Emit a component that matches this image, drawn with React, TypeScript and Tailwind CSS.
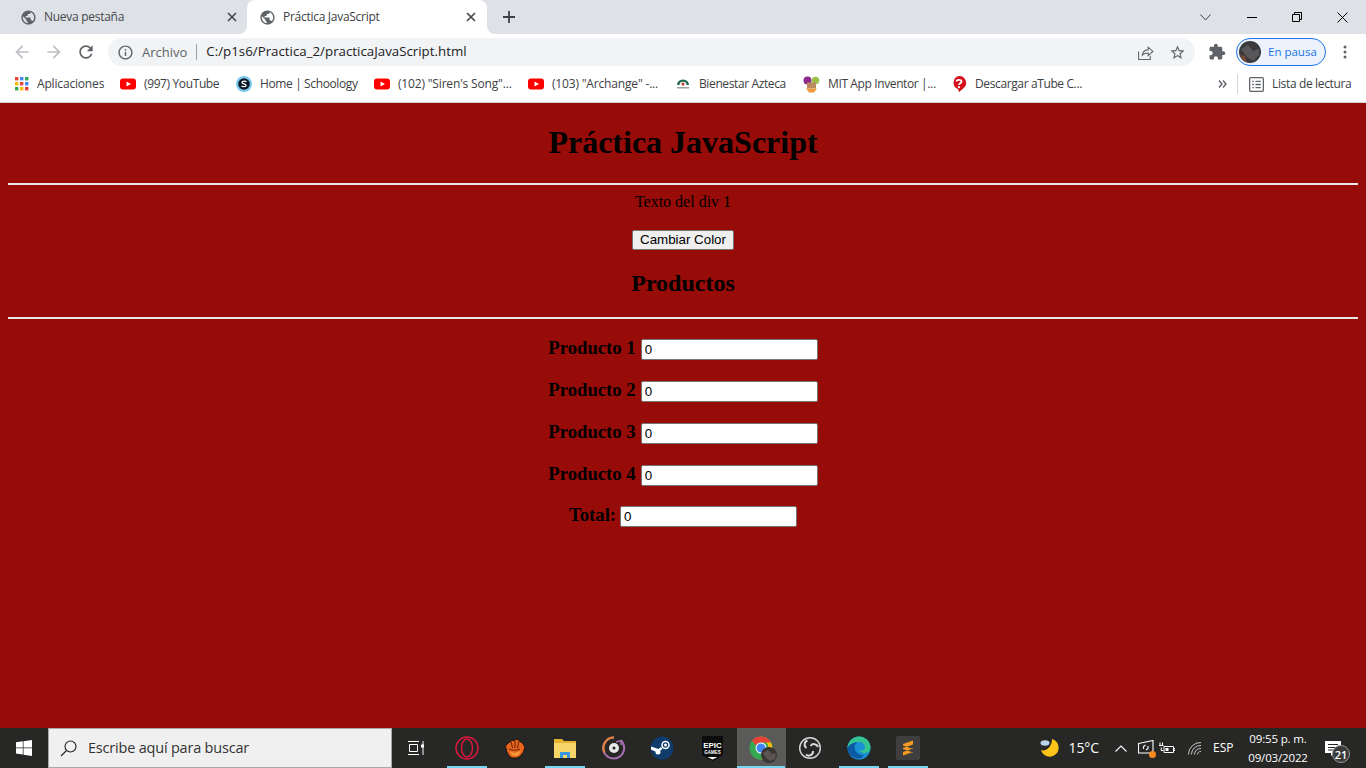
import React from 'react'

const GLOBE = 'M12 2C6.48 2 2 6.48 2 12s4.48 10 10 10 10-4.48 10-10S17.52 2 12 2zm-1 17.93c-3.95-.49-7-3.85-7-7.93 0-.62.08-1.21.21-1.79L9 15v1c0 1.1.9 2 2 2v1.93zm6.9-2.54c-.26-.81-1-1.39-1.9-1.39h-1v-3c0-.55-.45-1-1-1H8v-2h2c.55 0 1-.45 1-1V7h2c1.1 0 2-.9 2-2v-.41c2.93 1.19 5 4.06 5 7.41 0 2.08-.8 3.97-2.1 5.39z'

function Icon({ d, size = 16, color = '#5f6368' }: { d: string; size?: number; color?: string }) {
    return (
        <svg width={size} height={size} viewBox="0 0 24 24" fill={color} className="shrink-0">
            <path d={d} />
        </svg>
    )
}

function CloseX({ color = '#45494d' }: { color?: string }) {
    return (
        <svg width="10" height="10" viewBox="0 0 10 10" stroke={color} strokeWidth="1.7" className="shrink-0">
            <path d="M1 1l8 8M9 1l-8 8" />
        </svg>
    )
}

function Tab({ title, active }: { title: string; active?: boolean }) {
    return (
        <div className={active ? 'relative flex h-[34px] w-[240px] items-center rounded-t-lg bg-white pl-[12px] pr-[11px] text-[#3c4043]' : 'relative flex h-[34px] w-[239px] items-center pl-[12px] pr-[10px] text-[#45494d]'}>
            <Icon d={GLOBE} size={17} />
            <span className="ml-[7px] flex-1 text-[12px] leading-none tracking-[-0.28px]">{title}</span>
            <CloseX />
            {active && (
                <>
                    <span className="absolute bottom-0 left-[-8px] h-2 w-2 bg-white">
                        <span className="block h-2 w-2 rounded-br-lg bg-[#dee1e6]" />
                    </span>
                    <span className="absolute bottom-0 right-[-8px] h-2 w-2 bg-white">
                        <span className="block h-2 w-2 rounded-bl-lg bg-[#dee1e6]" />
                    </span>
                </>
            )}
        </div>
    )
}

function YouTubeIcon() {
    return (
        <svg width="16" height="16" viewBox="0 0 16 16" className="shrink-0">
            <rect y="2.5" width="16" height="11" rx="3" fill="#f00" />
            <path d="M6.5 5.5v5L11 8z" fill="#fff" />
        </svg>
    )
}

function AppsIcon() {
    const colors = ['#ea4335', '#4285f4', '#34a853', '#fbbc04', '#ea4335', '#4285f4', '#34a853', '#fbbc04', '#ea4335']
    return (
        <svg width="14" height="14" viewBox="0 0 14 14" className="shrink-0">
            {colors.map((c, i) => (
                <rect key={i} x={(i % 3) * 5} y={Math.floor(i / 3) * 5} width="3.4" height="3.4" fill={c} />
            ))}
        </svg>
    )
}

function SchoologyIcon() {
    return (
        <svg width="16" height="16" viewBox="0 0 16 16" className="shrink-0">
            <circle cx="8" cy="8" r="8" fill="#7cc8ea" />
            <circle cx="8" cy="8" r="5.8" fill="#0d1a24" />
            <path d="M10.4 5.9C9.8 5 6.1 4.8 6 6.5c-.1 1.7 4.2 1.2 4.1 3-.1 1.6-3.8 1.4-4.6.4" fill="none" stroke="#fff" strokeWidth="1.3" />
        </svg>
    )
}

function BienestarIcon() {
    return (
        <svg width="16" height="16" viewBox="0 0 16 16" className="shrink-0">
            <path d="M2 9a6 5.5 0 0 1 12 0h-2.500a3.500 3.200 0 0 0-7 0z" fill="#1d6b4c" />
            <circle cx="8" cy="8" r="1.600" fill="#c0392b" />
            <rect x="2" y="11" width="12" height="1.500" fill="#9aa5a0" />
        </svg>
    )
}

function MitIcon() {
    return (
        <svg width="17" height="17" viewBox="0 0 17 17" className="shrink-0">
            <circle cx="4.500" cy="4.500" r="4" fill="#8c2a8c" />
            <circle cx="12.500" cy="4.500" r="3.800" fill="#9cc04a" />
            <rect x="4" y="6.500" width="9" height="6" fill="#b98a5e" />
            <path d="M3 12.500h11l-3 4H6z" fill="#ef9a3c" />
        </svg>
    )
}

function HelpIcon() {
    return (
        <svg width="16" height="16" viewBox="0 0 16 16" className="shrink-0">
            <path d="M8 0a7 7 0 0 1 4 12.800L8 16l-1-3A6.800 6.800 0 0 1 8 0z" fill="#d3101c" />
            <path d="M5.500 5.500C5.800 3.300 10.500 3.300 10.500 5.800c0 1.600-2.500 1.500-2.500 3.200" fill="none" stroke="#fff" strokeWidth="1.800" />
            <circle cx="8" cy="11.200" r="1.100" fill="#fff" />
        </svg>
    )
}

function Bookmark({ icon, label, width, loose }: { icon: React.ReactNode; label: string; width: string; loose?: boolean }) {
    return (
        <div className={`flex shrink-0 items-center gap-[8px] ${width}`}>
            {icon}
            <span className={loose ? 'whitespace-nowrap text-[12px] leading-none tracking-[-0.17px] text-[#3c4043]' : 'whitespace-nowrap text-[12px] leading-none tracking-[-0.38px] text-[#3c4043]'}>{label}</span>
        </div>
    )
}

function BrowserChrome() {
    return (
        <header className="shrink-0 font-['Open_Sans',sans-serif]">
            <div className="flex h-[34px] items-end bg-[#dee1e6] pl-[8px]">
                <Tab title="Nueva pestaña" />
                <Tab title="Práctica JavaScript" active />
                <div className="ml-[14px] flex h-[34px] w-[16px] items-center justify-center">
                    <svg width="12" height="12" viewBox="0 0 12 12" stroke="#3c4043" strokeWidth="1.8"><path d="M6 0v12M0 6h12" /></svg>
                </div>
                <div className="ml-auto flex h-[34px] items-center">
                    <svg width="11" height="7" viewBox="0 0 11 7" fill="none" stroke="#3c4043" strokeWidth="1"><path d="M.5.5l5 5.500 5-5.500" /></svg>
                    <div className="ml-[36px] h-px w-[10px] bg-black" />
                    <svg width="10" height="10" viewBox="0 0 10 10" fill="none" stroke="#000" strokeWidth="1" className="ml-[35px]"><path d="M.5 2.500h7v7h-7zM2.500 2.500v-2h7v7h-2" /></svg>
                    <svg width="11" height="11" viewBox="0 0 11 11" stroke="#000" strokeWidth="1" className="ml-[35px] mr-[18px]"><path d="M.5.500l10 10M10.500.500l-10 10" /></svg>
                </div>
            </div>

            <div className="flex h-[34px] items-center bg-white pl-[12px] pt-[2px]">
                <Icon d="M20 11H7.830l5.590-5.590L12 4l-8 8 8 8 1.410-1.410L7.830 13H20v-2z" color="#bcbfc3" size={20} />
                <div className="ml-[12px]"><Icon d="M12 4l-1.410 1.410L16.170 11H4v2h12.170l-5.580 5.590L12 20l8-8z" color="#bcbfc3" size={20} /></div>
                <div className="ml-[12px]"><Icon d="M17.650 6.350C16.200 4.900 14.210 4 12 4c-4.420 0-7.990 3.580-7.990 8s3.570 8 7.990 8c3.730 0 6.840-2.550 7.730-6h-2.080c-.82 2.330-3.040 4-5.650 4-3.310 0-6-2.690-6-6s2.690-6 6-6c1.660 0 3.140.69 4.220 1.780L13 11h7V4l-2.350 2.350z" size={20} /></div>
                <div className="ml-[12px] flex h-[28px] w-[1087px] items-center rounded-full bg-[#f1f3f4] pl-[9px] pr-[9px]">
                    <Icon d="M11 7h2v2h-2zm0 4h2v6h-2zm1-9C6.480 2 2 6.480 2 12s4.480 10 10 10 10-4.480 10-10S17.520 2 12 2zm0 18c-4.410 0-8-3.590-8-8s3.590-8 8-8 8 3.590 8 8-3.590 8-8 8z" size={17} />
                    <span className="ml-[8px] text-[13px] leading-none text-[#5f6368]">Archivo</span>
                    <span className="ml-[9px] h-[16px] w-px bg-[#9aa0a6]" />
                    <span className="ml-[9px] text-[13.3px] leading-none text-[#202124]">C:/p1s6/Practica_2/practicaJavaScript.html</span>
                    <div className="ml-auto flex items-center gap-[15px]">
                        <svg width="17" height="17" viewBox="0 0 16 16" fill="none" stroke="#5f6368" strokeWidth="1"><path d="M1.500 7v7.500h11V11M5 10.500C5.500 7 8 5.500 10.500 5.500V3l4.500 4-4.500 4V8.500C8.500 8.500 6.500 9 5 10.500z" /></svg>
                        <Icon d="M22 9.240l-7.190-.62L12 2 9.190 8.630 2 9.240l5.460 4.730L5.820 21 12 17.270 18.180 21l-1.630-7.030L22 9.240zM12 15.400l-3.760 2.270 1-4.280-3.320-2.880 4.380-.38L12 6.100l1.710 4.040 4.380.38-3.320 2.880 1 4.280L12 15.400z" size={17} />
                    </div>
                </div>
                <div className="ml-[13px]"><Icon d="M20.500 11H19V7c0-1.100-.9-2-2-2h-4V3.500C13 2.120 11.880 1 10.500 1S8 2.120 8 3.500V5H4c-1.100 0-1.990.9-1.990 2v3.800H3.500c1.490 0 2.700 1.210 2.700 2.700s-1.210 2.700-2.700 2.700H2V20c0 1.100.9 2 2 2h3.800v-1.500c0-1.490 1.210-2.700 2.700-2.700 1.490 0 2.700 1.210 2.700 2.700V22H17c1.100 0 2-.9 2-2v-4h1.500c1.380 0 2.500-1.120 2.500-2.500S21.880 11 20.500 11z" size={18} /></div>
                <div className="ml-[10px] flex h-[28px] w-[90px] items-center rounded-full border border-[#1a73e8] bg-[#edf3fd] pl-[2px]">
                    <svg width="22" height="22" viewBox="0 0 22 22" className="shrink-0">
                        <circle cx="11" cy="11" r="11" fill="#3a3a3c" />
                        <path d="M2 8l7-4 5 6 6-2v6l-6 6-6-4z" fill="#59575a" />
                        <path d="M1 14l5 1 2 6-4-2z" fill="#7a4a34" />
                    </svg>
                    <span className="ml-[7px] whitespace-nowrap text-[11.500px] leading-none text-[#1a73e8]">En pausa</span>
                </div>
                <svg width="4" height="14" viewBox="0 0 4 14" fill="#5f6368" className="ml-[17px]"><circle cx="2" cy="2" r="1.500" /><circle cx="2" cy="7" r="1.500" /><circle cx="2" cy="12" r="1.500" /></svg>
            </div>

            <div className="flex h-[35px] items-center border-b border-[#d4d6da] bg-white pb-[2px] pl-[15px]">
                <Bookmark icon={<AppsIcon />} label="Aplicaciones" width="w-[105px]" loose />
                <Bookmark icon={<YouTubeIcon />} label="(997) YouTube" width="w-[116px]" />
                <Bookmark icon={<SchoologyIcon />} label="Home | Schoology" width="w-[138px]" />
                <Bookmark icon={<YouTubeIcon />} label={'(102) "Siren\'s Song"...'} width="w-[154px]" loose />
                <Bookmark icon={<YouTubeIcon />} label={'(103) "Archange" -...'} width="w-[147px]" loose />
                <Bookmark icon={<BienestarIcon />} label="Bienestar Azteca" width="w-[128px]" />
                <Bookmark icon={<MitIcon />} label="MIT App Inventor |..." width="w-[148px]" />
                <Bookmark icon={<HelpIcon />} label="Descargar aTube C..." width="w-[266px]" />
                <svg width="9" height="8" viewBox="0 0 9 8" fill="none" stroke="#5f6368" strokeWidth="1.4" className="ml-[1px]"><path d="M1 .5L4 4 1 7.500M5 .5L8 4 5 7.500" /></svg>
                <span className="ml-[10px] h-[20px] w-px bg-[#d4d6da]" />
                <svg width="15" height="15" viewBox="0 0 14 14" fill="none" stroke="#5f6368" strokeWidth="1.200" className="ml-[11px]"><rect x=".6" y=".6" width="12.800" height="12.800" rx="1" /><path d="M3 4h1.500M6 4h5M3 7h1.500M6 7h5M3 10h1.500M6 10h5" /></svg>
                <span className="ml-[8px] whitespace-nowrap text-[12px] leading-none tracking-[-0.35px] text-[#3c4043]">Lista de lectura</span>
            </div>
        </header>
    )
}

function ProductRow({ label, last }: { label: string; last?: boolean }) {
    return (
        <div className={last ? 'flex h-[21px] items-center justify-center gap-[4px]' : 'mb-[21px] flex h-[21px] items-center justify-center gap-[5px]'}>
            <label className="pb-[2px] text-[18.720px] font-bold leading-none">{label}</label>
            <input
                readOnly
                value="0"
                className="h-[21px] w-[177px] rounded-[2px] border border-[#767676] bg-white px-[3px] font-['Liberation_Sans',sans-serif] text-[13.333px] text-black outline-none"
            />
        </div>
    )
}

function PracticePage() {
    return (
        <main className="flex-1 bg-[#970b08] px-[8px] pt-[21px] font-['Liberation_Serif',serif] text-black">
            <h1 className="h-[37px] text-center text-[32px] font-bold leading-[37px]">Práctica JavaScript</h1>
            <hr className="mt-[22px] border-t-2 border-[#e8e8e8]" />
            <p className="mt-[8px] h-[18px] text-center text-[16px] leading-[18px]">Texto del div 1</p>
            <div className="mt-[19px] flex justify-center">
                <button className="h-[20px] w-[102px] rounded-[2px] border border-[#767676] bg-[#efefef] font-['Liberation_Sans',sans-serif] text-[13.333px] leading-none text-black">
                    Cambiar Color
                </button>
            </div>
            <h2 className="mt-[19px] h-[28px] text-center text-[24px] font-bold leading-[28px]">Productos</h2>
            <hr className="mt-[20px] border-t-2 border-[#e8e8e8]" />
            <div className="mt-[20px]">
                <ProductRow label="Producto 1" />
                <ProductRow label="Producto 2" />
                <ProductRow label="Producto 3" />
                <ProductRow label="Producto 4" />
                <div className="mt-[-1px]">
                    <ProductRow label="Total:" last />
                </div>
            </div>
        </main>
    )
}

function TaskButton({ children, state }: { children: React.ReactNode; state?: 'open' | 'active' }) {
    return (
        <div className={state === 'active' ? 'relative flex h-[40px] w-[49px] shrink-0 items-center justify-center bg-[#5a5a58] pr-[1px]' : 'relative flex h-[40px] w-[49px] shrink-0 items-center justify-center pr-[1px]'}>
            {children}
            {state === 'open' && <span className="absolute bottom-0 left-[4px] h-[2px] w-[40px] bg-[#76d7f2]" />}
            {state === 'active' && <span className="absolute bottom-0 left-0 h-[2px] w-[48px] bg-[#76d7f2]" />}
        </div>
    )
}

function Taskbar() {
    return (
        <footer className="flex h-[40px] shrink-0 items-center bg-[#272726] font-['Open_Sans',sans-serif] text-white">
            <div className="flex h-[40px] w-[48px] shrink-0 items-center justify-center">
                <svg width="16" height="16" viewBox="0 0 16 16" fill="#fff"><path d="M0 2.300l6.800-1v6.200H0zM7.500 1.200L16 0v7.500H7.500zM0 8.300h6.800v6.300l-6.800-1zM7.500 8.300H16V16l-8.500-1.200z" /></svg>
            </div>
            <div className="flex h-[40px] w-[344px] shrink-0 items-center border border-[#a8a8a8] bg-[#f0f0f0] pl-[11px]">
                <svg width="17" height="17" viewBox="0 0 17 17" fill="none" stroke="#1f1f1f" strokeWidth="1.1"><circle cx="10.500" cy="6.500" r="5.500" /><path d="M6.500 10.500L1 16" /></svg>
                <span className="ml-[11px] whitespace-nowrap text-[14.500px] leading-none tracking-[-0.2px] text-[#333]">Escribe aquí para buscar</span>
            </div>
            <div className="flex h-[40px] w-[48px] shrink-0 items-center justify-center">
                <svg width="16" height="16" viewBox="0 0 16 16" fill="none" stroke="#fff" strokeWidth="1"><path d="M0 1.500h11M0 14.500h11M1.500 4.500h8v7h-8zM15 1v14" /><rect x="13" y="4.500" width="3" height="3" fill="#fff" stroke="none" /></svg>
            </div>
            <div className="ml-[3px] flex">
                <TaskButton state="open">
                    <svg width="24" height="24" viewBox="0 0 24 24" fill="none" stroke="#d9173f" strokeWidth="1.500"><circle cx="12" cy="12" r="11" /><ellipse cx="12" cy="12" rx="5.500" ry="9" /></svg>
                </TaskButton>
                <TaskButton>
                    <svg width="22" height="22" viewBox="0 0 22 22" className="mr-[2px]">
                        <path d="M1.500 9L4 6l1.500-.5L7 3l3 .5L12 2l3 1 1.500 2 2 1 2.500 4-1.500 5-3 4-3.500 2H8l-3-2-2.500-5z" fill="#e9641b" stroke="#171210" strokeWidth="1" />
                        <path d="M7 4l1.500 7M11 3.500V11M15 4l-1.500 7M5 12c3 1.500 8 1.500 11 0" fill="none" stroke="#5c2208" strokeWidth="1" />
                        <path d="M6 14c3 3 8 2 11-1-1 4-3 6-6 6s-4-2-5-5z" fill="#f89a3a" />
                    </svg>
                </TaskButton>
                <TaskButton state="open">
                    <svg width="22" height="20" viewBox="0 0 22 20"><path d="M0 1h8l2 2h12v3H0z" fill="#e6b32e" /><path d="M0 5h22v15H0z" fill="#f8d568" /><path d="M6 14h10v6h-3v-3H9v3H6z" fill="#3d97dc" /></svg>
                </TaskButton>
                <TaskButton>
                    <svg width="24" height="24" viewBox="0 0 24 24" fill="none">
                        <path d="M19 4.500A10.500 10.500 0 1 1 12 1.500" stroke="#a86fb0" strokeWidth="2" />
                        <path d="M12 1.500A10.500 10.500 0 0 0 2.500 16.500" stroke="#e8813a" strokeWidth="2" />
                        <path d="M14 6l5-1.500V9" stroke="#a86fb0" strokeWidth="1.500" />
                        <circle cx="12" cy="12" r="5" fill="#e8e8e8" />
                        <circle cx="12" cy="12" r="1.500" fill="#222" />
                    </svg>
                </TaskButton>
                <TaskButton>
                    <svg width="24" height="24" viewBox="0 0 24 24" className="mr-[3px]"><circle cx="12" cy="12" r="11.500" fill="#0f3c6b" /><circle cx="15.500" cy="9" r="3.500" fill="none" stroke="#fff" strokeWidth="1.500" /><circle cx="15.500" cy="9" r="1.500" fill="#fff" /><path d="M1 13.500l6.500 3 5-3.500-1.500-2-2.500 2L1 10.500z" fill="#fff" /><circle cx="8" cy="16" r="2.500" fill="#fff" /></svg>
                </TaskButton>
                <TaskButton>
                    <svg width="21" height="25" viewBox="0 0 21 25"><path d="M1 0h19a1 1 0 0 1 1 1v18l-10.500 6L0 19V1a1 1 0 0 1 1-1z" fill="#0c0c0c" /><path d="M10.500 23.500l-5-2.500h10z" fill="#fff" /><text x="10.500" y="11.500" textAnchor="middle" fontSize="8" fontWeight="700" fill="#fff" fontFamily="Liberation Sans">EPIC</text><text x="10.500" y="17.500" textAnchor="middle" fontSize="4.500" fontWeight="700" fill="#fff" fontFamily="Liberation Sans">GAMES</text></svg>
                </TaskButton>
                <TaskButton state="active">
                    <span className="relative block h-[24px] w-[24px]">
                        <svg width="24" height="24" viewBox="0 0 24 24">
                            <circle cx="12" cy="12" r="11.500" fill="#34a853" />
                            <path d="M12 .5A11.500 11.500 0 0 1 22 6.500H12a5.500 5.500 0 0 0-5 3L3 4.500A11.500 11.500 0 0 1 12 .5z" fill="#ea4335" />
                            <path d="M22 6.500A11.500 11.500 0 0 1 12 23.500l5-8a5.500 5.500 0 0 0 0-9z" fill="#fbbc04" />
                            <circle cx="12" cy="12" r="5.500" fill="#fff" />
                            <circle cx="12" cy="12" r="4.500" fill="#4285f4" />
                        </svg>
                        <svg width="16" height="16" viewBox="0 0 16 16" className="absolute bottom-[-3px] right-[-4px]">
                            <circle cx="8" cy="8" r="8" fill="#3a3634" />
                            <path d="M2 6l5-3 4 4 4-1-1 6-5 2-4-3z" fill="#5a5452" />
                        </svg>
                    </span>
                </TaskButton>
                <TaskButton>
                    <svg width="22" height="22" viewBox="0 0 22 22" fill="none" stroke="#d8d8d8">
                        <circle cx="11" cy="11" r="10.300" strokeWidth="1.400" />
                        <path d="M8.500 3.500a4.200 4.200 0 0 0-1 7.500M19 10a4.200 4.200 0 0 0-7.500-1M7 17.500a4.200 4.200 0 0 0 7-3.500" strokeWidth="2" />
                        <circle cx="11" cy="11" r="1.500" fill="#272726" stroke="none" />
                    </svg>
                </TaskButton>
                <TaskButton state="open">
                    <svg width="24" height="24" viewBox="0 0 24 24"><circle cx="12" cy="12" r="11.500" fill="#1b8fd6" /><path d="M12 .5a11.500 11.500 0 0 1 11.500 11.500c0 3-3 5-6.500 5-2.500 0-4-1-4.500-2.500 3.500.5 5.500-1 5.500-3C18 8 15 6 12 6 6 6 2 9 .5 12 .5 6 6 .5 12 .5z" fill="#35c48f" /><path d="M.5 12C2 9 6 6 11 6.500c-3 1-4 4-3 7 1 3.500 5 6 9 5.500-1.500 2.500-3 3.500-5 3.500C6 22.500.5 18 .5 12z" fill="#0c59a4" /></svg>
                </TaskButton>
                <TaskButton state="open">
                    <svg width="24" height="24" viewBox="0 0 24 24"><rect width="24" height="24" rx="2" fill="#3f3f3f" /><path d="M17 4.500L7 8v4l10-3.500zM7 9.500L17 13v3.500L7 13zM17 12.500L7 16v3.500L17 16z" fill="#f89b22" /></svg>
                </TaskButton>
            </div>

            <div className="ml-auto flex h-[40px] items-center">
                <svg width="20" height="20" viewBox="0 0 20 20"><path d="M12 1a9 9 0 1 1-11 11c5 2 11-3 11-11z" fill="#fcc419" /><ellipse cx="5" cy="5" rx="4.500" ry="2.800" fill="#b9d4ec" /></svg>
                <span className="ml-[9px] whitespace-nowrap text-[14px] leading-none tracking-[-0.1px]">15°C</span>
                <svg width="12" height="7" viewBox="0 0 12 7" fill="none" stroke="#fff" strokeWidth="1.1" className="ml-[16px]"><path d="M.5 6.500L6 1l5.500 5.500" /></svg>
                <span className="relative ml-[11px] block h-[16px] w-[16px]">
                    <svg width="16" height="16" viewBox="0 0 16 16" fill="none" stroke="#fff" strokeWidth="1.1"><path d="M.5 3.500L15 .5v12.500H.5z" /><path d="M5.500 9V6.500l2-1.500M10 6v2.500L8 10" /></svg>
                    <span className="absolute bottom-[-2px] right-[-2px] h-[7px] w-[7px] rounded-full bg-[#f58a1f]" />
                </span>
                <svg width="16" height="13" viewBox="0 0 16 13" fill="none" stroke="#fff" strokeWidth="1" className="ml-[5px]"><path d="M5 4.500h9.500v6H5z" /><path d="M15 6.500h1v2h-1" /><rect x="6.500" y="6" width="3" height="3" fill="#fff" stroke="none" /><path d="M1 .5v3M3.500.5v3M0 3.500h4.500M2.200 5.500v3h2" /></svg>
                <svg width="14" height="13" viewBox="0 0 14 13" fill="none" stroke="#c8c8c8" strokeWidth="1" className="ml-[13px]"><path d="M.5 12.500A12 12 0 0 1 13 .5M3.500 12.500A9 9 0 0 1 13 3.500M6.500 12.500A6 6 0 0 1 13 6.500M9.500 12.500a3 3 0 0 1 3.500-3" /></svg>
                <span className="ml-[11px] w-[21px] text-[12px] leading-none">ESP</span>
                <div className="ml-[15px] flex w-[58px] flex-col items-center gap-[7px] whitespace-nowrap text-[11.500px] leading-none tracking-[-0.15px]">
                    <span>09:55 p. m.</span>
                    <span>09/03/2022</span>
                </div>
                <span className="relative ml-[18px] mr-[25px] block h-[14px] w-[16px]">
                    <svg width="16" height="15" viewBox="0 0 16 15" fill="#fff"><path d="M0 0h16v12H9l-3 3v-3H0z" /><path d="M3 3.500h10M3 6.500h10M3 9h7" stroke="#272726" strokeWidth="1" /></svg>
                    <span className="absolute bottom-[-8px] right-[-9px] flex h-[18px] w-[18px] items-center justify-center rounded-full border border-[#9a9a9a] bg-[#3a3a3a] text-[11px] font-semibold leading-none">21</span>
                </span>
            </div>
        </footer>
    )
}

export default function App(): JSX.Element {
    return (
        <div className="flex h-[768px] w-[1366px] flex-col overflow-hidden">
            <BrowserChrome />
            <PracticePage />
            <Taskbar />
        </div>
    )
}
